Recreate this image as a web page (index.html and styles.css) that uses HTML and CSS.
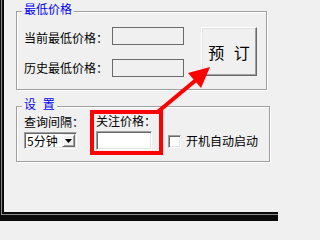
FILE: index.html
```html
<!DOCTYPE html>
<html lang="zh-CN">
<head>
<meta charset="utf-8">
<title>价格监控</title>
<link rel="stylesheet" href="styles.css">
</head>
<body>
<div class="frame">
  <div class="frame-mid">
    <div class="client">
      <div class="group group-price">
        <div class="legend">最低价格</div>
        <div class="price-body">
          <div class="price-rows">
            <div class="row row-current"><span class="label label-wide">当前最低价格：</span><span class="field"></span></div>
            <div class="row row-history"><span class="label label-wide">历史最低价格：</span><span class="field"></span></div>
          </div>
          <button class="btn-order">预 订</button>
        </div>
      </div>
      <div class="group group-settings">
        <div class="legend legend-spaced">设 置</div>
        <div class="settings-body">
          <div class="col col-interval">
            <div class="label">查询间隔：</div>
            <div class="combo">
              <span class="combo-text">5分钟</span>
              <span class="combo-btn"><svg width="7" height="4" viewBox="0 0 7 4"><polygon points="0,0 7,0 3.5,4" fill="#000"/></svg></span>
            </div>
          </div>
          <div class="col col-watch">
            <div class="label">关注价格：</div>
            <div class="input"></div>
          </div>
          <div class="check">
            <span class="check-box"></span>
            <span class="check-label">开机自动启动</span>
          </div>
        </div>
      </div>
    </div>
  </div>
</div>
<svg class="annot" width="278" height="221" viewBox="0 0 278 221">
  <rect x="92" y="112" width="69" height="41" fill="none" stroke="#ff0000" stroke-width="4" shape-rendering="crispEdges"/>
  <line x1="157" y1="112.5" x2="196" y2="80" stroke="#ff0000" stroke-width="4"/>
  <polygon points="210,67 188,73 201,88" fill="#ff0000"/>
</svg>
</body>
</html>
```

FILE: styles.css
```css
* {
  box-sizing: border-box;
}

html,
body {
  margin: 0;
  padding: 0;
  background: #f0f0f0;
}

body {
  width: 278px;
  height: 221px;
  overflow: hidden;
  position: relative;
  font-family: "Noto Sans CJK SC", "Noto Sans", sans-serif;
  font-size: 12px;
  line-height: 14px;
  color: #000;
}

/* window frame */
.frame {
  height: 221px;
  background: #0a0a0a;
  border-left: 1px solid #0a0a0a;
  border-bottom: 6px solid #0a0a0a;
}

.frame-mid {
  border-left: 1px solid #8c8c8c;
  border-bottom: 1px solid #8c8c8c;
}

.client {
  height: 214px;
  border-left: 2px solid #0a0a0a;
  border-bottom: 2px solid #0a0a0a;
  background: #f0f0f0;
  padding: 11px 0 0 12px;
}

/* group boxes */
.group {
  border: 1px solid #a0a0a0;
  box-shadow: inset 1px 1px 0 #fff, 1px 1px 0 #fff;
  padding-left: 7px;
}

.group-price {
  width: 251px;
  height: 79px;
}

.group-settings {
  width: 254px;
  height: 56px;
  margin-top: 16px;
}

.legend {
  width: fit-content;
  margin: -10px 0 0 -2px;
  padding: 0 2px;
  background: #f0f0f0;
  color: #0000ff;
}

.legend-spaced {
  word-spacing: 4px;
}

/* price group */
.price-body {
  display: flex;
  margin-top: 11px;
}

.price-rows {
  display: flex;
  flex-direction: column;
  gap: 14px;
}

.row {
  display: flex;
}

.row-current {
  align-items: flex-end;
}

.row-history {
  align-items: center;
}

.label-wide {
  width: 88px;
}

.field {
  width: 72px;
  height: 18px;
  border: 1px solid #6b6b6b;
}

.btn-order {
  width: 56px;
  height: 49px;
  margin: 0 0 0 17px;
  padding: 0;
  background: #f0f0f0;
  border: 1px solid;
  border-color: #fff #696969 #696969 #fff;
  box-shadow: inset -1px -1px 0 #a0a0a0, inset 1px 1px 0 #e3e3e3;
  font-family: "Noto Sans CJK SC", sans-serif;
  font-size: 16px;
  line-height: 18px;
  word-spacing: 6px;
  color: #000;
}

/* settings group */
.settings-body {
  display: flex;
  align-items: flex-start;
  margin-top: 3px;
}

.col {
  display: flex;
  flex-direction: column;
  align-items: flex-start;
  margin-right: 12px;
}

.col-interval {
  padding-top: 1px;
}

.combo,
.input,
.check-box {
  background: #fff;
  border: 1px solid;
  border-color: #a0a0a0 #fff #fff #a0a0a0;
  box-shadow: inset 1px 1px 0 #696969, inset -1px -1px 0 #e3e3e3;
}

.combo {
  display: flex;
  align-items: center;
  width: 53px;
  height: 17px;
  margin-top: 3px;
  padding: 1px;
}

.combo-text {
  flex: 1;
  padding-left: 1px;
  line-height: 13px;
}

.combo-btn {
  display: flex;
  align-items: center;
  justify-content: center;
  width: 13px;
  height: 13px;
  background: #f0f0f0;
  border: 1px solid;
  border-color: #f0f0f0 #696969 #696969 #f0f0f0;
  box-shadow: inset 1px 1px 0 #fff, inset -1px -1px 0 #a0a0a0;
}

.input {
  width: 56px;
  height: 19px;
  margin-top: 3px;
}

.check {
  display: flex;
  align-items: center;
  gap: 5px;
  margin-top: 20px;
}

.check-box {
  width: 13px;
  height: 13px;
}

/* annotation overlay (red box and arrow drawn over the dialog) */
.annot {
  position: absolute;
  top: 0;
  left: 0;
  pointer-events: none;
}
```
